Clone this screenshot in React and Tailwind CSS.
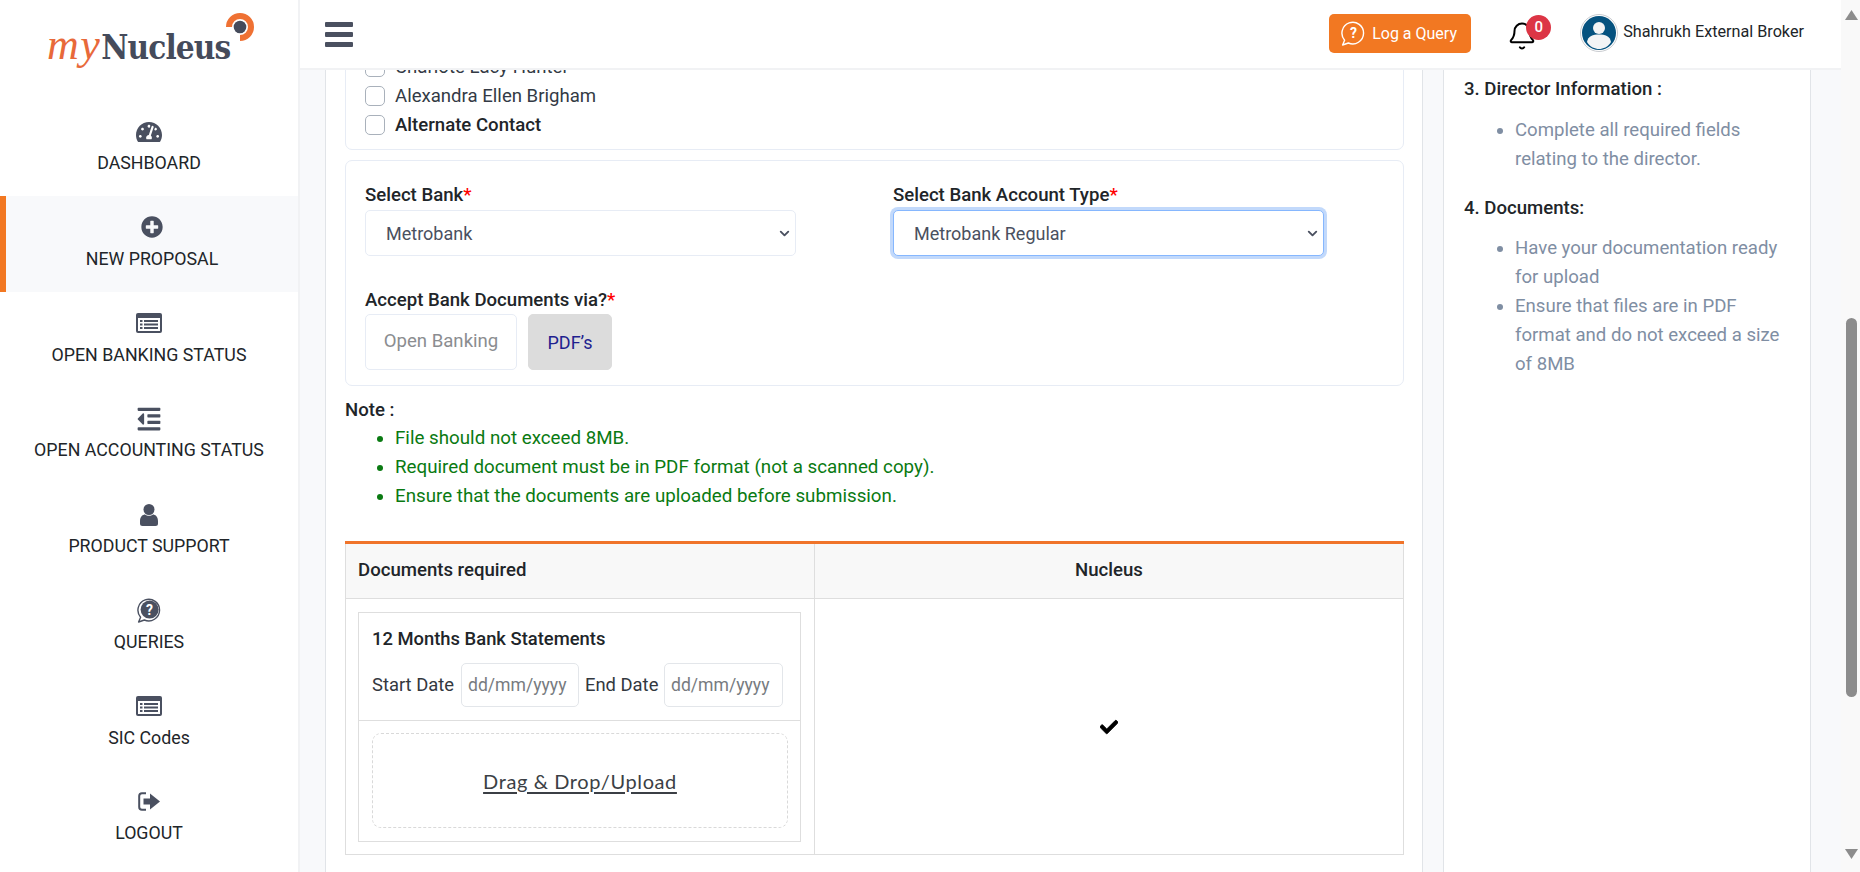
import { Bell, ChevronDown } from "lucide-react";
import { FaTachometerAlt, FaPlusCircle, FaOutdent, FaCheck } from "react-icons/fa";

function ListIcon() {
  return (
    <svg width="26" height="20" viewBox="0 0 26 20">
      <rect x="0" y="0" width="26" height="20" rx="2" fill="#4a5060" />
      <rect x="2" y="5" width="22" height="13" fill="#fff" />
      <rect x="4" y="7" width="2.5" height="2" fill="#4a5060" />
      <rect x="4" y="10.5" width="2.5" height="2" fill="#4a5060" />
      <rect x="4" y="14" width="2.5" height="2" fill="#4a5060" />
      <rect x="8" y="7" width="14" height="2" fill="#4a5060" />
      <rect x="8" y="10.5" width="14" height="2" fill="#4a5060" />
      <rect x="8" y="14" width="14" height="2" fill="#4a5060" />
    </svg>
  );
}

function UserIcon() {
  return (
    <svg width="18" height="22" viewBox="0 0 18 22">
      <circle cx="9" cy="5.5" r="5.5" fill="#4a5060" />
      <path d="M0 17 C0 12.5 3 10.5 5 10.5 C7 12.3 11 12.3 13 10.5 C15 10.5 18 12.5 18 17 L18 19.5 Q18 22 15.5 22 L2.5 22 Q0 22 0 19.5 Z" fill="#4a5060" />
    </svg>
  );
}

function QueryIcon({ color = "#4a5060", solid = true, size = 25 }) {
  return (
    <svg width={size} height={size} viewBox="0 0 25 25">
      <path d="M3.6 19.2 A10.8 10.8 0 1 1 7.4 22 L1.6 24 Z" fill="none" stroke={color} strokeWidth="1.4" strokeLinejoin="round" />
      {solid && <circle cx="12.6" cy="11.6" r="9" fill={color} />}
      <text x="12.6" y="16.6" textAnchor="middle" fontSize="14" fontWeight="700" fontFamily="Roboto, sans-serif" fill={solid ? "#fff" : color}>?</text>
    </svg>
  );
}

function LogoutIcon() {
  return (
    <svg width="23" height="19" viewBox="0 0 23 19">
      <path d="M8 1.2 H4 Q1.2 1.2 1.2 4 V15 Q1.2 17.8 4 17.8 H8" fill="none" stroke="#4a5060" strokeWidth="2" />
      <path d="M5.5 6.5 H12 V1.5 L22 9.5 L12 17.5 V12.5 H5.5 Z" fill="#4a5060" />
    </svg>
  );
}

const navItems = [
  { label: "DASHBOARD", icon: <FaTachometerAlt size={26} color="#4a5060" /> },
  { label: "NEW PROPOSAL", icon: <FaPlusCircle size={22} color="#4a5060" />, active: true },
  { label: "OPEN BANKING STATUS", icon: <ListIcon /> },
  { label: "OPEN ACCOUNTING STATUS", icon: <FaOutdent size={26} color="#4a5060" /> },
  { label: "PRODUCT SUPPORT", icon: <UserIcon /> },
  { label: "QUERIES", icon: <QueryIcon /> },
  { label: "SIC Codes", icon: <ListIcon /> },
  { label: "LOGOUT", icon: <LogoutIcon /> },
];

function Sidebar() {
  return (
    <aside className="w-[300px] shrink-0 bg-white border-r-2 border-[#f1f2f4]">
      <div className="relative h-[100.5px] pl-[47px] pt-[25px]">
        <div className="flex items-baseline leading-[40px]">
          <span className="font-['Liberation_Serif',serif] italic text-[44px] text-[#e8693a] tracking-[1.5px]">my</span>
          <span className="font-['DejaVu_Serif_Condensed','DejaVu_Serif',serif] font-bold text-[33px] text-[#454b5b] tracking-[-0.9px]">Nucleus</span>
        </div>
        <svg className="absolute left-[225px] top-[12px]" width="30" height="30" viewBox="0 0 30 30">
          <path d="M4 15 A11 11 0 1 1 15 26" fill="none" stroke="#ef7133" strokeWidth="6" />
          <circle cx="15" cy="15" r="6.3" fill="#454b5b" />
        </svg>
      </div>
      <nav>
        {navItems.map((item) => (
          <div
            key={item.label}
            className={
              item.active
                ? "h-[95.75px] border-l-[6px] border-[#f27822] bg-[#f8f9fb] flex flex-col items-center pt-[20px]"
                : "h-[95.75px] flex flex-col items-center pt-[20px]"
            }
          >
            <div className="h-[22px] flex items-center justify-center">{item.icon}</div>
            <div className="mt-[8.5px] leading-[24px] text-[17.8px] text-[#212529] whitespace-nowrap">
              {item.label}
            </div>
          </div>
        ))}
      </nav>
    </aside>
  );
}

function Header() {
  return (
    <header className="relative z-10 h-[70px] shrink-0 bg-white border-b-2 border-[#f1f2f4] flex items-center pl-[25px] pr-[37px]">
      <div className="flex flex-col gap-[5px] w-[28px]">
        <div className="h-[5px] rounded-[1px] bg-[#4a5060]" />
        <div className="h-[5px] rounded-[1px] bg-[#4a5060]" />
        <div className="h-[5px] rounded-[1px] bg-[#4a5060]" />
      </div>
      <button className="ml-auto h-[39px] w-[142px] -mt-[1px] rounded-[5px] bg-[#f27822] text-white text-[16px] flex items-center pl-[12px] gap-[6px]">
        <QueryIcon color="#fff" solid={false} size={25} />
        <span>Log a Query</span>
      </button>
      <div className="relative ml-[38px] w-[71px] h-[40px]">
        <Bell size={30} color="#000" strokeWidth={1.6} className="absolute left-[-2px] top-[7px]" />
        <span className="absolute left-[17px] top-[1px] w-[25px] h-[25px] rounded-full bg-[#dc3545] text-white text-[15px] font-medium flex items-center justify-center">
          0
        </span>
      </div>
      <div className="flex items-center -mt-[3px]">
        <svg width="38" height="38" viewBox="0 0 38 38">
          <circle cx="19" cy="19" r="18.5" fill="#fff" stroke="#c9ccd0" />
          <circle cx="19" cy="19" r="17" fill="#05527f" />
          <circle cx="19" cy="14" r="6" fill="#f3f4f5" />
          <path d="M7 28 C8 22 13 20.5 19 20.5 C25 20.5 30 22 31 28 C28 33 23 35 19 35 C15 35 10 33 7 28 Z" fill="#f3f4f5" />
        </svg>
        <span className="ml-[5px] text-[16.2px] text-[#212529] whitespace-nowrap">Shahrukh External Broker</span>
      </div>
    </header>
  );
}

function Label({ children }) {
  return (
    <div className="leading-[24px] text-[18.6px] font-medium text-[#212529]">
      {children}
      <span className="text-[#ff0000]">*</span>
    </div>
  );
}

function CheckRow({ children, bold }) {
  return (
    <div className="h-[29px] flex gap-[10px] pt-[4px]">
      <div className="w-[20px] h-[20px] shrink-0 rounded-[5px] border border-[#a9b1bb] bg-white" />
      <span className={bold ? "leading-[20px] text-[18.6px] font-medium text-[#212529]" : "leading-[20px] text-[18.6px] text-[#333a45]"}>
        {children}
      </span>
    </div>
  );
}

function BankSelect({ value, focused }) {
  return (
    <div className="relative mt-[3px]">
      <select
        defaultValue={value}
        className={
          focused
            ? "appearance-none w-full h-[46px] rounded-[5px] border border-[#86b7fe] ring-[3px] ring-[#c2d9fb] bg-white pl-[20px] text-[18px] text-[#4a5060]"
            : "appearance-none w-full h-[46px] rounded-[5px] border border-[#e7ecf5] bg-white pl-[20px] text-[18px] text-[#4a5060]"
        }
      >
        <option>{value}</option>
      </select>
      <ChevronDown size={15} strokeWidth={3} color="#4a5060" className="absolute right-[4px] top-[16px] pointer-events-none" />
    </div>
  );
}

function DateInput({ className }) {
  return (
    <input
      readOnly
      placeholder="dd/mm/yyyy"
      className={"h-[44px] rounded-[5px] border border-[#e3e6ea] pl-[6px] text-[17.6px] placeholder:text-[#777b80] outline-none " + className}
    />
  );
}

function LeftPanel() {
  return (
    <div className="w-[1098px] shrink-0 bg-white border-x border-[#e1e4e8] pl-[19px] pr-[18px] -mt-[18px]">
      <div className="rounded-[7px] border border-[#e7ecf5] pl-[19px] pb-[9px]">
        <CheckRow>Charlote Lacy Hunter</CheckRow>
        <CheckRow>Alexandra Ellen Brigham</CheckRow>
        <CheckRow bold>Alternate Contact</CheckRow>
      </div>

      <div className="mt-[10px] rounded-[7px] border border-[#e7ecf5] pl-[19px] pt-[22px] pb-[15px]">
        <div className="flex gap-[97px]">
          <div className="w-[431px]">
            <Label>Select Bank</Label>
            <BankSelect value="Metrobank" />
          </div>
          <div className="w-[431px]">
            <Label>Select Bank Account Type</Label>
            <BankSelect value="Metrobank Regular" focused />
          </div>
        </div>
        <div className="mt-[32px]">
          <Label>Accept Bank Documents via?</Label>
        </div>
        <div className="mt-[2px] flex gap-[11px]">
          <div className="w-[152px] h-[56px] rounded-[5px] border border-[#e7ecf5] flex items-center justify-center text-[18.6px] text-[#8b8d90]">
            Open Banking
          </div>
          <div className="w-[84px] h-[56px] rounded-[5px] border border-[#dcdcdc] bg-[#dcdcdc] flex items-center justify-center text-[18px] text-[#1f1f8f]">
            PDF’s
          </div>
        </div>
      </div>

      <div className="mt-[12px] leading-[24px] text-[18.6px] font-medium text-[#212529]">Note :</div>
      <ul className="mt-[2px] list-disc pl-[50px] text-[18.75px] leading-[29px] text-[#0a7a12]">
        <li>File should not exceed 8MB.</li>
        <li>Required document must be in PDF format (not a scanned copy).</li>
        <li>Ensure that the documents are uploaded before submission.</li>
      </ul>

      <div className="mt-[30px] border-t-[3px] border-[#f0742a]">
        <div className="grid grid-cols-[469px_1fr] border-x border-b border-[#dedede]">
          <div className="h-[55px] bg-[#f8f8f8] border-r border-b border-[#dedede] pl-[12px] flex items-center text-[18.6px] font-medium text-[#212529]">
            Documents required
          </div>
          <div className="h-[55px] bg-[#f8f8f8] border-b border-[#dedede] flex items-center justify-center text-[18.6px] font-medium text-[#212529]">
            Nucleus
          </div>
          <div className="border-r border-[#dedede] pl-[12px] pr-[13px] pt-[13px] pb-[12px]">
            <div className="border border-[#dedede]">
              <div className="pl-[13px] pt-[14px] pb-[13px] border-b border-[#dedede]">
                <div className="leading-[24px] text-[18.4px] font-medium text-[#212529]">12 Months Bank Statements</div>
                <div className="mt-[12px] flex items-center text-[18.4px] text-[#33383f]">
                  <span className="w-[89px]">Start Date</span>
                  <DateInput className="w-[118px]" />
                  <span className="ml-[6px] w-[79px]">End Date</span>
                  <DateInput className="w-[119px]" />
                </div>
              </div>
              <div className="pl-[13px] pr-[12px] pt-[12px] pb-[13px]">
                <div className="h-[95px] rounded-[9px] border border-dashed border-[#d9d9d9] flex items-center justify-center">
                  <span className="font-[Lato,sans-serif] text-[20px] text-[#3b3f45] underline underline-offset-[3px] tracking-[0.6px]">Drag &amp; Drop/Upload</span>
                </div>
              </div>
            </div>
          </div>
          <div className="flex items-center justify-center">
            <FaCheck size={18} color="#000" stroke="#000" strokeWidth={24} />
          </div>
        </div>
      </div>
    </div>
  );
}

function RightPanel() {
  return (
    <div className="ml-[20px] w-[368px] shrink-0 bg-white border-x border-[#e1e4e8] pl-[20px] pr-[20px] pt-[7px]">
      <div className="leading-[24px] text-[18.6px] font-medium text-[#212529]">3. Director Information :</div>
      <ul className="mt-[14.5px] list-disc pl-[51px] text-[18.6px] leading-[29px] text-[#7f8ea3]">
        <li>Complete all required fields relating to the director.</li>
      </ul>
      <div className="mt-[22px] leading-[24px] text-[18.6px] font-medium text-[#212529]">4. Documents:</div>
      <ul className="mt-[14px] list-disc pl-[51px] text-[18.6px] leading-[29px] text-[#7f8ea3]">
        <li>Have your documentation ready for upload</li>
        <li>Ensure that files are in PDF format and do not exceed a size of 8MB</li>
      </ul>
    </div>
  );
}

function Scrollbar() {
  return (
    <div className="w-[19px] shrink-0 bg-[#f9f9f9] flex flex-col items-center">
      <svg className="mt-[10px] ml-[1px]" width="13" height="10" viewBox="0 0 13 10">
        <path d="M6.5 0 L13 10 H0 Z" fill="#8c8c8c" />
      </svg>
      <div className="mt-[298px] ml-[1px] w-[11px] h-[379px] rounded-[6px] bg-[#8c8c8c]" />
      <svg className="mt-[152px] ml-[1px]" width="13" height="10" viewBox="0 0 13 10">
        <path d="M0 0 H13 L6.5 10 Z" fill="#8c8c8c" />
      </svg>
    </div>
  );
}

export default function App() {
  return (
    <div className="flex h-screen w-full overflow-hidden bg-[#f8f9fb] font-[Roboto,sans-serif]">
      <Sidebar />
      <div className="flex-1 min-w-0 flex flex-col">
        <Header />
        <div className="flex-1 min-h-0 overflow-hidden flex pl-[25px]">
          <LeftPanel />
          <RightPanel />
        </div>
      </div>
      <Scrollbar />
    </div>
  );
}
